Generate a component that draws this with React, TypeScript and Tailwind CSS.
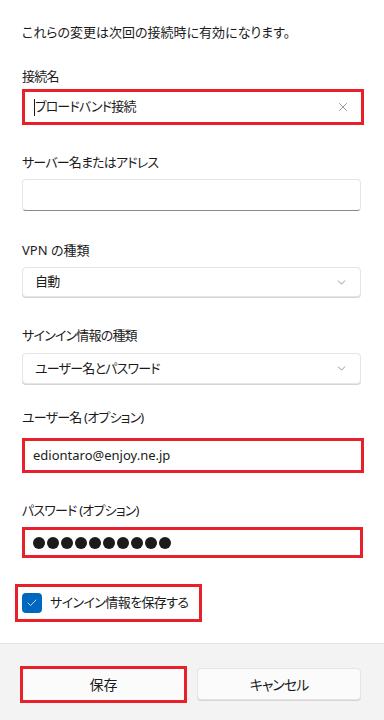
import React from 'react';
import { ChevronDown, X, Check } from 'lucide-react';

const font = { fontFamily: '"Noto Sans", "Noto Sans CJK JP", sans-serif' };

const Label: React.FC<{ text: string; className?: string }> = ({ text, className = '' }) => (
  <div className={`h-[20px] whitespace-nowrap leading-[20px] text-[13px] tracking-[-0.8px] text-[#1b1b1b] [font-feature-settings:'palt'] ${className}`}>
    {text}
  </div>
);

const Select: React.FC<{ value: string; className?: string }> = ({ value, className = '' }) => (
  <div
    className={`flex w-[339px] items-center justify-between rounded-[4px] border border-[#e5e5e5] bg-white pl-[12px] pr-[12px] shadow-[0_1px_0_#d5d5d5] ${className}`}
  >
    <span className="text-[13px] tracking-[-0.8px] text-[#1b1b1b] [font-feature-settings:'palt']">{value}</span>
    <ChevronDown size={13} strokeWidth={1.2} className="text-[#5c5c5c]" />
  </div>
);

export default function App() {
  return (
    <div className="flex h-[720px] w-[384px] flex-col bg-white" style={font}>
      <div className="flex-1 px-[22px] pt-[22px]">
        <div className="h-[20px] whitespace-nowrap leading-[20px] text-[13px] text-[#1b1b1b] [font-feature-settings:'palt']">
          これらの変更は次回の接続時に有効になります。
        </div>

        <Label text="接続名" className="mt-[24px]" />
        <div className="mt-[3px] flex h-[36px] w-[342px] items-center justify-between border-[3px] border-[#e8202a] bg-white pl-[9px] pr-[11px]">
          <div className="flex items-center">
            <span className="h-[17px] w-px bg-[#1b1b1b]" />
            <span className="text-[13px] tracking-[-0.8px] text-[#1b1b1b] [font-feature-settings:'palt']">ブロードバンド接続</span>
          </div>
          <X size={14} strokeWidth={1.1} className="text-[#5c5c5c]" />
        </div>

        <Label text="サーバー名またはアドレス" className="mt-[27px]" />
        <div className="mt-[7px] h-[32px] w-[339px] rounded-[4px] border border-[#e5e5e5] border-b-[#8a8a8a] bg-white" />

        <Label text="VPN の種類" className="mt-[29px] tracking-[0px]" />
        <Select value="自動" className="mt-[7px] h-[30px]" />

        <Label text="サインイン情報の種類" className="mt-[28px]" />
        <Select value="ユーザー名とパスワード" className="mt-[8px] h-[31px]" />

        <Label text="ユーザー名 (オプション)" className="mt-[23px]" />
        <div className="mt-[11px] flex h-[35px] w-[342px] items-center border-[3px] border-[#e8202a] bg-white pl-[8px]">
          <span className="text-[13px] text-[#1b1b1b]">ediontaro@enjoy.ne.jp</span>
        </div>

        <Label text="パスワード (オプション)" className="mt-[27px]" />
        <div className="mt-[7px] flex h-[31px] w-[341px] items-center gap-[2px] border-[3px] border-[#e8202a] bg-white pl-[8px]">
          {Array.from({ length: 10 }).map((_, i) => (
            <span key={i} className="h-[12px] w-[12px] rounded-full bg-[#1b1b1b]" />
          ))}
        </div>

        <div className="-ml-[7px] mt-[26px] flex h-[38px] w-[187px] items-center border-[3px] border-[#e8202a] pl-[4px]">
          <span className="flex h-[20px] w-[20px] shrink-0 items-center justify-center rounded-[4px] bg-[#0067c0]">
            <Check size={12} strokeWidth={1.5} className="text-white" />
          </span>
          <span className="ml-[8px] whitespace-nowrap text-[13px] tracking-[-0.6px] text-[#1b1b1b] [font-feature-settings:'palt']">
            サインイン情報を保存する
          </span>
        </div>
      </div>

      <div className="flex h-[77px] border-t border-[#e5e5e5] bg-[#f3f3f3] px-[20px] pt-[22px]">
        <div className="h-[37px] w-[167px] border-[3px] border-[#e8202a]">
          <button className="h-full w-full rounded-[3px] bg-[#fbfbfb] text-[14px] text-[#1b1b1b]">保存</button>
        </div>
        <button className="ml-[10px] mt-[2px] h-[32px] w-[164px] rounded-[4px] border border-[#e5e5e5] bg-[#fbfbfb] text-[14px] tracking-[-1px] text-[#1b1b1b] shadow-[0_1px_0_#d5d5d5] [font-feature-settings:'palt']">
          キャンセル
        </button>
      </div>
    </div>
  );
}
